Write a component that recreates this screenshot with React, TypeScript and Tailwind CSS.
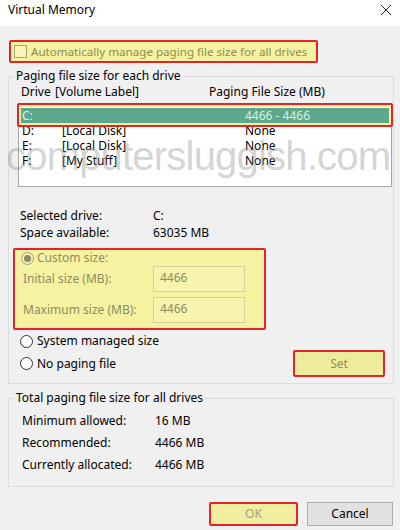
import React from "react";

const RED = "border-[#e0262a]";

function Radio({ checked = false, disabled = false }: { checked?: boolean; disabled?: boolean }) {
  return (
    <span
      className={`flex h-[13px] w-[13px] shrink-0 items-center justify-center rounded-full border ${
        disabled ? "border-[#a3a07a] bg-[#f3f0b0]" : "border-[#333333] bg-white"
      }`}
    >
      {checked && (
        <span className={`h-[7px] w-[7px] rounded-full ${disabled ? "bg-[#8d8b6a]" : "bg-[#333333]"}`} />
      )}
    </span>
  );
}

function SizeInput({ value }: { value: string }) {
  return (
    <div className="h-[26px] w-[92px] border border-[#d6d29c] bg-[#f7f4ae] pl-[6px] pt-[3px] leading-[16px] text-[#8f8d5e]">
      {value}
    </div>
  );
}

const drives = [
  { drive: "D:", label: "[Local Disk]", size: "None" },
  { drive: "E:", label: "[Local Disk]", size: "None" },
  { drive: "F:", label: "[My Stuff]", size: "None" },
];

const totals = [
  { label: "Minimum allowed:", value: "16 MB" },
  { label: "Recommended:", value: "4466 MB" },
  { label: "Currently allocated:", value: "4466 MB" },
];

export default function App() {
  return (
    <div className="relative h-[530px] w-[400px] overflow-hidden bg-[#f0f0f0] text-[12px] text-black [font-family:'Segoe_UI','Noto_Sans',sans-serif]">
      {/* Title bar */}
      <div className="flex h-[26px] items-start justify-between bg-white pl-[8px] pr-[8px] pt-[2px]">
        <span className="leading-[16px]">Virtual Memory</span>
        <svg width="12" height="12" viewBox="0 0 12 12" className="mt-[2px]">
          <path d="M1 1L11 11M11 1L1 11" stroke="#222" strokeWidth="1" />
        </svg>
      </div>

      {/* Auto manage */}
      <div
        className={`ml-[9px] mt-[14px] flex h-[23px] w-[309px] items-center gap-[4px] rounded-[2px] border-2 ${RED} bg-[#f5f2a2] pl-[3px] text-[#8f8d4f]`}
      >
        <span className="h-[13px] w-[13px] shrink-0 border border-[#a8a47a] bg-[#f8f5b6]" />
        <span className="whitespace-nowrap text-[11.6px] leading-[16px]">
          Automatically manage paging file size for all drives
        </span>
      </div>

      {/* Paging file size for each drive */}
      <fieldset className="ml-[8px] mt-[5px] w-[386px] border border-[#dcdcdc] pb-[6px]">
        <legend className="ml-[5px] px-[2px] leading-[16px]">Paging file size for each drive</legend>

        <div className="flex pl-[12px] leading-[16px]">
          <span className="w-[34px]">Drive</span>
          <span className="w-[154px]">[Volume Label]</span>
          <span>Paging File Size (MB)</span>
        </div>

        <div className="ml-[9px] mt-[4px] h-[83px] w-[374px] border border-[#a5a5a5] bg-white pt-[3px]">
          <div className="relative mx-[1px] flex h-[15px] items-center bg-[#5ea88e] pl-[2px] leading-[15px] text-[#dcefe2]">
            <span className="w-[40px]">C:</span>
            <span className="w-[183px]" />
            <span>4466 - 4466</span>
            <span
              className={`absolute -bottom-[4px] -left-[3px] -right-[3px] -top-[5px] rounded-[2px] border-2 ${RED} shadow-[inset_0_0_0_2px_#f5f2a2]`}
            />
          </div>
          {drives.map((d) => (
            <div key={d.drive} className="mx-[1px] flex h-[15px] items-center pl-[2px] leading-[15px]">
              <span className="w-[40px]">{d.drive}</span>
              <span className="w-[183px]">{d.label}</span>
              <span>{d.size}</span>
            </div>
          ))}
        </div>

        <div className="mt-[20px] pl-[11px] leading-[17px]">
          <div className="flex">
            <span className="w-[133px]">Selected drive:</span>
            <span>C:</span>
          </div>
          <div className="flex">
            <span className="w-[133px]">Space available:</span>
            <span>63035 MB</span>
          </div>
        </div>

        {/* Custom size */}
        <div
          className={`ml-[4px] mt-[7px] h-[82px] w-[253px] rounded-[2px] border-2 ${RED} bg-[#f5f2a2] text-[#8f8d5e]`}
        >
          <div className="flex h-[16px] items-center gap-[3px] pl-[6px] leading-[16px]">
            <Radio checked disabled />
            <span>Custom size:</span>
          </div>
          <div className="flex items-center pl-[8px]">
            <span className="w-[130px]">Initial size (MB):</span>
            <SizeInput value="4466" />
          </div>
          <div className="mt-[5px] flex items-center pl-[8px]">
            <span className="w-[130px]">Maximum size (MB):</span>
            <SizeInput value="4466" />
          </div>
        </div>

        <div className="ml-[11px] mt-[3px] flex h-[16px] items-center gap-[4px] leading-[16px]">
          <Radio />
          <span>System managed size</span>
        </div>
        <div className="mt-[1px] flex items-center justify-between pl-[11px] pr-[8px]">
          <div className="flex items-center gap-[4px] leading-[16px]">
            <Radio />
            <span>No paging file</span>
          </div>
          <div
            className={`flex h-[27px] w-[92px] items-center justify-center rounded-[2px] border-2 ${RED} bg-[#efeb9c] text-[#8f8d5e]`}
          >
            Set
          </div>
        </div>
      </fieldset>

      {/* Totals */}
      <fieldset className="ml-[8px] mt-[6px] w-[386px] border border-[#dcdcdc] pb-[10px] pt-[4px]">
        <legend className="ml-[5px] px-[2px] leading-[16px]">Total paging file size for all drives</legend>
        {totals.map((t) => (
          <div key={t.label} className="flex h-[22px] items-center pl-[13px]">
            <span className="w-[133px]">{t.label}</span>
            <span>{t.value}</span>
          </div>
        ))}
      </fieldset>

      {/* Buttons */}
      <div className="mt-[15px] flex justify-end gap-[9px] pr-[7px]">
        <div
          className={`flex h-[24px] w-[89px] items-center justify-center rounded-[2px] border-2 ${RED} bg-[#f2eea0] text-[#a3a17a]`}
        >
          OK
        </div>
        <div className="flex h-[24px] w-[86px] items-center justify-center border border-[#adadad] bg-[#e1e1e1]">
          Cancel
        </div>
      </div>

      {/* Watermark */}
      <div className="pointer-events-none absolute left-[6px] top-[136px] whitespace-nowrap text-[40px] leading-[40px] tracking-[-0.8px] text-[#8f8f8f]/40 [font-family:'Liberation_Sans',Arial,sans-serif]">
        computersluggish.com
      </div>
    </div>
  );
}
